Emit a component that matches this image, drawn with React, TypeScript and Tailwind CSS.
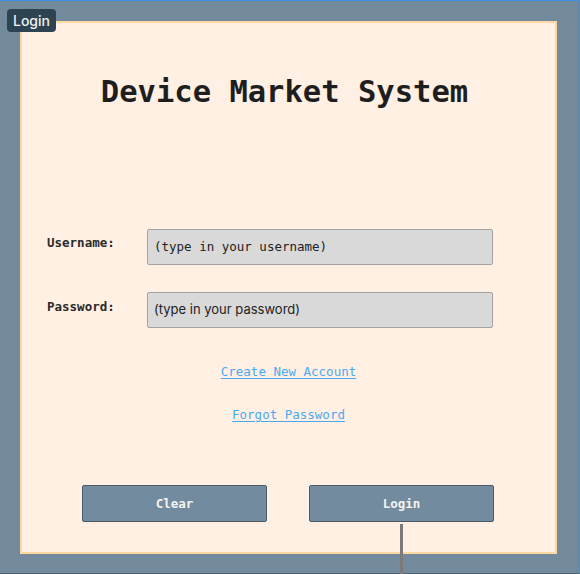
import React from "react";

const mono = "font-['DejaVu_Sans_Mono',monospace]";

export default function App() {
  return (
    <div className="relative w-[580px] h-[574px] bg-[#738a9c] border-t border-r border-[#3b8fe4] border-b border-b-[#4d6170] pt-[20px] pl-[20px] pr-[22px] pb-[19px]">
      {/* Frame label */}
      <div className="absolute left-[7px] top-[8px] h-[23px] px-[6px] rounded-[4px] bg-[#2d4352] text-[#eef2f5] text-[14px] leading-[23px] font-['Inter',sans-serif] font-medium">
        Login
      </div>

      <div className="h-full bg-[#fff0e3] border-2 border-[#ffd8a0] flex flex-col items-center">
        <h1 className={`${mono} mt-[51px] mr-[8px] text-[30.5px] leading-[36px] font-bold text-[#1e1e1e]`}>
          Device Market System
        </h1>

        {/* Form */}
        <div className="mt-[119px] self-stretch pl-[25px] flex flex-col gap-[27px]">
          <div className="flex items-start">
            <label className={`${mono} w-[100px] pt-[6px] text-[12.5px] leading-[16px] font-bold text-[#2a2a2a]`}>
              Username:
            </label>
            <div className={`${mono} w-[346px] h-[36px] flex items-center px-[6px] bg-[#d9d9d9] border border-[#a3a3a3] rounded-[2px] text-[12.5px] text-[#222]`}>
              (type in your username)
            </div>
          </div>
          <div className="flex items-start">
            <label className={`${mono} w-[100px] pt-[7px] text-[12.5px] leading-[16px] font-bold text-[#2a2a2a]`}>
              Password:
            </label>
            <div className="w-[346px] h-[36px] flex items-center px-[6px] bg-[#d9d9d9] border border-[#a3a3a3] rounded-[2px] font-['Inter',sans-serif] text-[13px] text-[#222]">
              (type in your password)
            </div>
          </div>
        </div>

        {/* Links */}
        <a className={`${mono} mt-[35px] text-[12.5px] leading-[18px] text-[#4ba9f2] underline underline-offset-2`}>
          Create New Account
        </a>
        <a className={`${mono} mt-[25px] text-[12.5px] leading-[18px] text-[#4ba9f2] underline underline-offset-2`}>
          Forgot Password
        </a>

        {/* Buttons */}
        <div className="mt-[61px] self-stretch pl-[60px] flex gap-[42px]">
          <button className={`${mono} w-[185px] h-[37px] pt-[2px] bg-[#738b9e] border border-[#4a5a67] rounded-[2px] text-[12.5px] font-bold text-[#f3f3f3]`}>
            Clear
          </button>
          <button className={`${mono} w-[185px] h-[37px] pt-[2px] bg-[#738b9e] border border-[#4a5a67] rounded-[2px] text-[12.5px] font-bold text-[#f3f3f3]`}>
            Login
          </button>
        </div>
      </div>

      {/* Connector from Login button */}
      <div className="absolute left-[400px] top-[523px] w-[3px] h-[51px] bg-[#7a7a7a]" />
    </div>
  );
}
